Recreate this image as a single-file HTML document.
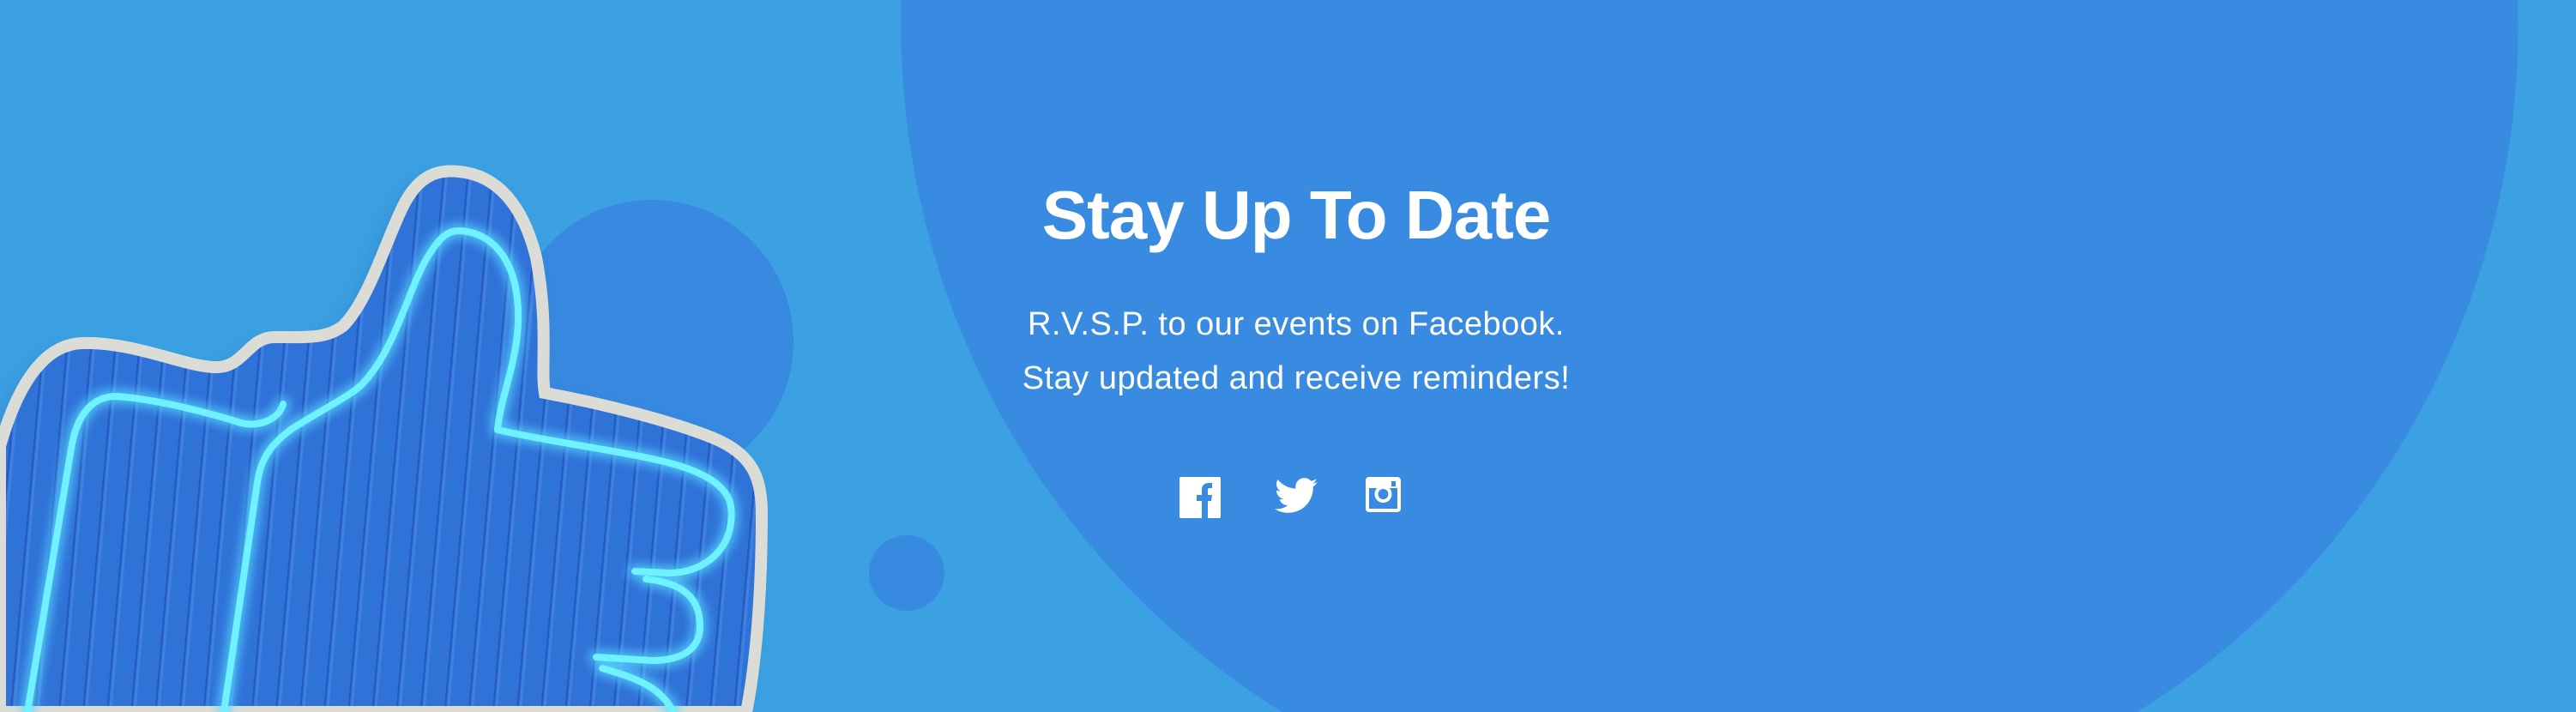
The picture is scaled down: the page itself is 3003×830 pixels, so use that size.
<!DOCTYPE html>
<html><head><meta charset="utf-8"><style>
html,body{margin:0;padding:0;width:3003px;height:830px;overflow:hidden}
#w{width:3003px;height:830px;overflow:hidden;position:relative;font-family:"Liberation Sans",sans-serif;background:radial-gradient(circle 943px at 1993px 30px,#388be0 99.9%,#3ba1e2 100%)}
.c2{position:absolute;left:595px;top:233px;width:330px;height:330px;border-radius:50%;background:#3889e0}
.c3{position:absolute;left:1013px;top:624px;width:88px;height:88px;border-radius:50%;background:#3889e0}
h1{position:absolute;left:1100px;width:822px;top:205px;margin:0;text-align:center;color:#fff;font-size:80px;font-weight:bold;letter-spacing:-1px}
.p{position:absolute;left:1100px;width:822px;text-align:center;color:#fff;font-size:38px;letter-spacing:0.5px}
svg.ic{position:absolute}
</style></head><body><div id="w">
<div class="c2"></div>
<div class="c3"></div>
<svg style="position:absolute;left:0;top:0" width="1000" height="830">
<defs>
<pattern id="st" width="28" height="830" patternUnits="userSpaceOnUse" patternTransform="rotate(5)">
<rect width="28" height="830" fill="#2f72d8"/><rect x="0" width="2" height="830" fill="#2558c0"/><rect x="3" width="3" height="830" fill="#4d8fe6" opacity=".5"/>
</pattern>
<filter id="gl" x="-20%" y="-20%" width="140%" height="140%"><feGaussianBlur stdDeviation="6"/></filter>
<filter id="sh"><feGaussianBlur stdDeviation="14"/></filter>
</defs>
<path d="M0,520 C20,450 50,402 95,400 C160,398 220,430 255,428 C285,426 290,393 320,393 C360,393 380,395 400,380 C430,350 450,280 470,240 C490,200 515,198 535,200 C580,204 610,240 625,300 C640,380 630,430 635,458 C700,470 780,490 830,510 C880,530 888,560 888,600 C888,700 880,780 870,830 L0,830 Z" fill="#2a6fbe" opacity=".5" filter="url(#sh)" transform="translate(-10,10)"/>
<path d="M0,520 C20,450 50,402 95,400 C160,398 220,430 255,428 C285,426 290,393 320,393 C360,393 380,395 400,380 C430,350 450,280 470,240 C490,200 515,198 535,200 C580,204 610,240 625,300 C640,380 630,430 635,458 C700,470 780,490 830,510 C880,530 888,560 888,600 C888,700 880,780 870,830 L0,830 Z" fill="url(#st)" stroke="#dcdcd6" stroke-width="14"/>
<g fill="none" stroke-linecap="round" stroke-linejoin="round">
<g stroke="#58d8ff" stroke-width="16" filter="url(#gl)" opacity=".8">
<path d="M32,830 L83,523 C90,480 110,462 135,462 C180,465 240,480 281,493 C300,498 325,490 330,471"/>
<path d="M261,830 L300,562 C305,530 320,515 340,500 C380,475 410,460 421,449 C460,410 475,340 497,302 C510,280 520,269 535,269 C565,270 590,290 600,330 C615,400 585,450 580,501 C640,515 720,525 765,536 C820,548 848,566 852,590 C858,640 820,668 780,668 L740,666 M753,675 C800,680 816,700 816,730 C816,760 790,770 760,770 L695,766 M702,779 C740,790 770,800 785,830"/>
</g>
<g stroke="#6ff2ff" stroke-width="8">
<path d="M32,830 L83,523 C90,480 110,462 135,462 C180,465 240,480 281,493 C300,498 325,490 330,471"/>
<path d="M261,830 L300,562 C305,530 320,515 340,500 C380,475 410,460 421,449 C460,410 475,340 497,302 C510,280 520,269 535,269 C565,270 590,290 600,330 C615,400 585,450 580,501 C640,515 720,525 765,536 C820,548 848,566 852,590 C858,640 820,668 780,668 L740,666 M753,675 C800,680 816,700 816,730 C816,760 790,770 760,770 L695,766 M702,779 C740,790 770,800 785,830"/>
</g>
</g>
</svg>
<h1>Stay Up To Date</h1>
<div class="p" style="top:357px">R.V.S.P. to our events on Facebook.</div>
<div class="p" style="top:420px">Stay updated and receive reminders!</div>
<svg class="ic" style="left:1375px;top:556px" width="48" height="48" viewBox="0 0 48 48"><rect width="48" height="48" rx="2" fill="#fff"/><path d="M26,48 V28 H20 V21 H26 V15 C26,10 29,7 34,7 H38 V13 H35 C33,13 33,14 33,16 V21 H38 L37,28 H33 V48 Z" fill="#388be0"/></svg>
<svg class="ic" style="left:1486px;top:556px" width="50" height="44" viewBox="0 0 24 20"><path fill="#fff" d="M24,2.4c-.9.4-1.8.6-2.8.8 1-.6 1.8-1.6 2.2-2.7-1 .6-2 1-3.1 1.2C19.3.6 18 0 16.6 0c-2.7 0-4.9 2.2-4.9 4.9 0 .4 0 .8.1 1.1C7.7 5.8 4.1 3.9 1.7.9c-.4.7-.7 1.6-.7 2.5 0 1.7.9 3.2 2.2 4.1-.8 0-1.6-.2-2.2-.6v.1c0 2.4 1.7 4.4 3.9 4.8-.4.1-.8.2-1.3.2-.3 0-.6 0-.9-.1.6 2 2.4 3.4 4.6 3.4-1.7 1.3-3.8 2.1-6.1 2.1-.4 0-.8 0-1.2-.1 2.2 1.4 4.8 2.2 7.5 2.2 9.1 0 14-7.5 14-14v-.6c1-.7 1.8-1.6 2.5-2.5z"/></svg>
<svg class="ic" style="left:1592px;top:556px" width="41" height="41" viewBox="0 0 41 41"><rect width="41" height="41" rx="4" fill="#fff"/><rect x="4" y="13" width="33" height="24" fill="#388be0"/><circle cx="20.5" cy="20" r="10" fill="#fff"/><circle cx="20.5" cy="20" r="6" fill="#388be0"/><rect x="30" y="5" width="5" height="6" fill="#388be0"/><rect x="4" y="9" width="8" height="4" fill="#fff"/></svg>
</div></body></html>
